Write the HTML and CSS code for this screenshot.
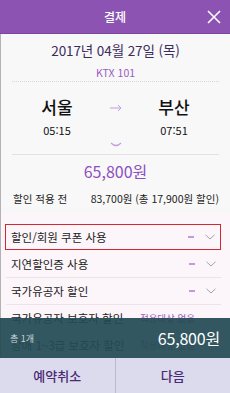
FILE: index.html
```html
<!DOCTYPE html>
<html lang="ko">
<head>
<meta charset="utf-8">
<link rel="stylesheet" href="styles.css">
</head>
<body>
<div class="page">
  <header class="topbar">
    <span class="title">결제</span>
    <svg class="close" width="14" height="14" viewBox="0 0 14 14"><path d="M1 1L13 13M13 1L1 13" stroke="#fff" stroke-width="1.6" fill="none"/></svg>
  </header>
  <main class="content">
    <section class="trip">
      <div class="date">2017년 04월 27일 (목)</div>
      <div class="train">KTX 101</div>
      <div class="dots"></div>
      <div class="route">
        <div class="station">
          <div class="city">서울</div>
          <div class="time">05:15</div>
        </div>
        <svg class="arrow" width="12" height="8" viewBox="0 0 12 8"><path d="M0 4H11M8 1L11 4L8 7" stroke="#c79be0" stroke-width="1" fill="none"/></svg>
        <div class="station">
          <div class="city">부산</div>
          <div class="time">07:51</div>
        </div>
      </div>
      <svg class="more" width="12" height="6" viewBox="0 0 12 6"><path d="M1 1Q6 6 11 1" stroke="#c79be0" stroke-width="1.2" fill="none"/></svg>
      <div class="line"></div>
      <div class="price">65,800원</div>
      <div class="before">
        <span>할인 적용 전</span>
        <span>83,700원 (총 17,900원 할인)</span>
      </div>
    </section>
    <section class="options">
      <div class="opt selected"><span class="label">할인/회원 쿠폰 사용</span><span class="dash"></span><svg class="chev" width="10" height="6" viewBox="0 0 10 6"><path d="M0.5 0.8L5 5L9.5 0.8" stroke="#9a9a9a" stroke-width="0.9" fill="none"/></svg></div>
      <div class="opt"><span class="label">지연할인증 사용</span><span class="dash"></span><svg class="chev" width="10" height="6" viewBox="0 0 10 6"><path d="M0.5 0.8L5 5L9.5 0.8" stroke="#9a9a9a" stroke-width="0.9" fill="none"/></svg></div>
      <div class="opt"><span class="label">국가유공자 할인</span><span class="dash"></span><svg class="chev" width="10" height="6" viewBox="0 0 10 6"><path d="M0.5 0.8L5 5L9.5 0.8" stroke="#9a9a9a" stroke-width="0.9" fill="none"/></svg></div>
      <div class="opt"><span class="label">국가유공자 보호자 할인</span><span class="none">적용대상 없음</span></div>
      <div class="opt"><span class="label">장애 1~3급 보호자 할인</span><span class="none">적용대상 없음</span></div>
    </section>
  </main>
  <footer class="footer">
    <div class="summary">
      <span class="count">총 1개</span>
      <span class="total">65,800원</span>
    </div>
    <div class="actions">
      <button class="btn">예약취소</button>
      <button class="btn">다음</button>
    </div>
  </footer>
</div>
</body>
</html>
```
FILE: styles.css
```css
* { box-sizing: border-box; }
html, body { margin: 0; padding: 0; }
body {
  width: 230px;
  height: 393px;
  overflow: hidden;
  font-family: "Noto Sans CJK KR", "Noto Sans", sans-serif;
  background: #f8f7f8;
}
.page {
  position: relative;
  width: 230px;
  height: 393px;
  display: flex;
  flex-direction: column;
  overflow: hidden;
}
.topbar {
  height: 34px;
  background: #8c53b2;
  border-bottom: 1px solid #7b45a1;
  display: flex;
  align-items: center;
  justify-content: center;
  position: relative;
  flex: none;
}
.title {
  color: #fff;
  font-size: 12px;
  font-weight: 500;
}
.close {
  position: absolute;
  right: 9px;
  top: 10px;
}
.content {
  flex: 1;
  min-height: 0;
  border-left: 1px solid #b3b3b3;
  display: flex;
  flex-direction: column;
}
.trip {
  display: flex;
  flex-direction: column;
  align-items: center;
  padding: 6px 11px 0 11px;
  background: #f8f8f8;
  flex: none;
}
.date {
  font-size: 13.5px;
  color: #3a2c5c;
  line-height: 20px;
  letter-spacing: -0.1px;
}
.train {
  margin-top: 6px;
  font-size: 10.5px;
  color: #9a5cc4;
  line-height: 14px;
}
.dots {
  margin-top: 1px;
  width: 100%;
  border-top: 1px dotted #d9d4dc;
}
.route {
  margin-top: 14px;
  width: 100%;
  display: flex;
  justify-content: space-between;
  align-items: flex-start;
  padding: 0 25px 0 25px;
}
.station {
  display: flex;
  flex-direction: column;
  align-items: center;
  width: 40px;
}
.city {
  font-size: 17px;
  line-height: 22px;
  color: #111;
  font-weight: 500;
}
.time {
  margin-top: 6px;
  font-size: 11px;
  color: #111;
  line-height: 12px;
}
.arrow { margin-top: 8px; }
.more { margin-top: 6px; }
.line {
  margin-top: 6px;
  width: 100%;
  border-top: 1px solid #e4e1e4;
}
.price {
  margin-top: 5px;
  font-size: 16px;
  color: #8e4fbf;
  line-height: 22px;
}
.before {
  margin-top: 9px;
  width: 100%;
  display: flex;
  justify-content: space-between;
  font-size: 10.5px;
  color: #222;
  line-height: 16px;
  padding-left: 1px;
}
.options {
  margin-top: 6px;
  padding: 11px 9px 0 4px;
  background: #fcf5f9;
  flex: 1;
  display: flex;
  flex-direction: column;
}
.opt {
  flex: none;
  height: 27px;
  display: flex;
  align-items: center;
  padding: 0 4px 0 5px;
  border-bottom: 1px solid #ece3ea;
  margin-left: 1px;
}
.opt.selected {
  border: 1.5px solid #d4262e;
  margin-left: 0;
  height: 26px;
  margin-bottom: 1px;
}
.label {
  flex: 1;
  font-size: 11.5px;
  color: #222;
}
.dash {
  width: 6px;
  height: 1.5px;
  background: #c399dc;
  margin-right: 11px;
}
.chev { margin-right: 1px; }
.none {
  font-size: 9.5px;
  color: #9a5cc4;
  margin-right: 22px;
}
.footer {
  position: absolute;
  left: 0;
  right: 0;
  bottom: 0;
  display: flex;
  flex-direction: column;
}
.summary {
  height: 40px;
  background: rgba(36, 74, 84, 0.93);
  display: flex;
  align-items: center;
  justify-content: space-between;
  padding: 0 10px 0 10px;
}
.count {
  font-size: 9px;
  color: #c9d4d8;
}
.total {
  font-size: 16px;
  color: #fff;
  letter-spacing: -0.2px;
}
.actions {
  height: 35px;
  display: flex;
  background: #dcdbee;
}
.btn {
  flex: 1;
  border: none;
  background: transparent;
  font-family: inherit;
  font-size: 13px;
  font-weight: 500;
  color: #4a2a72;
  padding: 0;
}
.btn + .btn { border-left: 1px solid #b9b8cf; }
```
